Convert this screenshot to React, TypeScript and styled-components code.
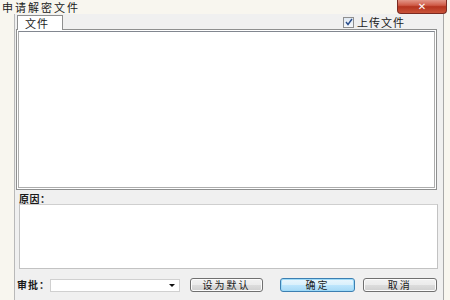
import React from "react";
import styled, { createGlobalStyle } from "styled-components";

const GlobalStyle = createGlobalStyle`
  html, body {
    margin: 0;
    padding: 0;
  }
  body {
    font-family: "Noto Sans CJK SC", "DejaVu Sans", sans-serif;
    font-size: 11px;
    color: #1a1a1a;
  }
`;

const Window = styled.div`
  width: 450px;
  height: 300px;
  overflow: hidden;
  display: flex;
  flex-direction: column;
  background: #f8f6ef;
`;

const TitleBar = styled.div`
  height: 14px;
  display: flex;
  justify-content: space-between;
  align-items: flex-start;
  flex-shrink: 0;
`;

const Title = styled.div`
  padding-left: 2px;
  font-size: 11px;
  line-height: 14px;
  letter-spacing: 2px;
  color: #202020;
  white-space: nowrap;
`;

const CloseButton = styled.div`
  width: 50px;
  height: 15px;
  margin-right: 3px;
  margin-top: -1px;
  border-radius: 0 0 4px 4px;
  border: 1px solid #7a2a22;
  border-top: none;
  background: linear-gradient(#e6a194, #cf5b47 45%, #b5341f 55%, #c9533a);
  color: #fff;
  display: flex;
  align-items: center;
  justify-content: center;
  font-family: "DejaVu Sans", sans-serif;
  font-size: 10px;
  font-weight: bold;
  box-sizing: border-box;
`;

const Frame = styled.div`
  flex: 1;
  margin: 0 6px 0 14px;
  border-left: 1px solid #b9b9b9;
  border-right: 1px solid #a8a8a8;
  background: #f0f0f0;
  display: flex;
  flex-direction: column;
  padding: 0 6px 0 1px;
`;

const TabRow = styled.div`
  height: 15px;
  display: flex;
  justify-content: space-between;
  align-items: flex-end;
  flex-shrink: 0;
`;

const Tab = styled.div`
  width: 46px;
  height: 15px;
  box-sizing: border-box;
  border: 1px solid #8e8f8f;
  border-bottom: none;
  background: #fff;
  margin-left: 1px;
  padding-left: 7px;
  line-height: 14px;
  letter-spacing: 1px;
  margin-bottom: -1px;
  position: relative;
  z-index: 1;
`;

const CheckLabel = styled.label`
  display: flex;
  align-items: center;
  gap: 3px;
  margin-right: 32px;
  margin-bottom: 1px;
  letter-spacing: 1px;
  font-size: 11px;
  line-height: 12px;
`;

const CheckBox = styled.span`
  width: 9px;
  height: 9px;
  border: 1px solid #8f8f8f;
  background: linear-gradient(#dfe8f2, #f6f9fc);
  display: flex;
  align-items: center;
  justify-content: center;
`;

const TabPage = styled.div`
  height: 161px;
  border: 1px solid #8e8f8f;
  background: #fff;
  padding: 1px;
  flex-shrink: 0;
  box-sizing: border-box;
`;

const ListBox = styled.div`
  height: 100%;
  box-sizing: border-box;
  border: 1px solid #adadad;
  border-top-color: #828790;
  background: #fff;
`;

const Caption = styled.div`
  padding: 3px 0 0 3px;
  height: 11px;
  line-height: 11px;
  font-size: 10px;
  font-weight: bold;
  letter-spacing: 0.5px;
  white-space: nowrap;
`;

const TextArea = styled.div`
  margin: 0 -1px 0 3px;
  height: 65px;
  box-sizing: border-box;
  border: 1px solid #c2c2c2;
  border-top-color: #cfcfcf;
  background: #fff;
  flex-shrink: 0;
`;

const BottomRow = styled.div`
  display: flex;
  align-items: center;
  margin-top: 9px;
  padding-left: 1px;
`;

const Label = styled.span`
  font-size: 10px;
  font-weight: bold;
  letter-spacing: 1px;
  width: 33px;
  white-space: nowrap;
  line-height: 12px;
`;

const Combo = styled.div`
  width: 131px;
  height: 13px;
  box-sizing: border-box;
  border: 1px solid #d0d0d0;
  background: #fff;
  display: flex;
  justify-content: flex-end;
  align-items: center;
  padding-right: 4px;
`;

const Arrow = styled.span`
  width: 0;
  height: 0;
  border-left: 3px solid transparent;
  border-right: 3px solid transparent;
  border-top: 3px solid #111;
`;

const Button = styled.div<{ w: number; gap: number; primary?: boolean }>`
  width: ${(p) => p.w}px;
  height: 14px;
  margin-left: ${(p) => p.gap}px;
  box-sizing: border-box;
  border: 1px solid ${(p) => (p.primary ? "#3c7fb1" : "#707070")};
  border-radius: 3px;
  background: ${(p) =>
    p.primary
      ? "linear-gradient(#eaf6fd, #d9f0fc 50%, #bee6fd 50%, #a7d9f5)"
      : "linear-gradient(#f2f2f2, #ebebeb 50%, #dddddd 50%, #cfcfcf)"};
  box-shadow: ${(p) => (p.primary ? "inset 0 0 0 1px #9edbf9" : "inset 0 0 0 1px #fcfcfc")};
  display: flex;
  align-items: center;
  justify-content: center;
  font-size: 10px;
  letter-spacing: 2px;
  line-height: 12px;
  white-space: nowrap;
`;

export default function App() {
  return (
    <>
      <GlobalStyle />
      <Window>
        <TitleBar>
          <Title>申请解密文件</Title>
          <CloseButton>✕</CloseButton>
        </TitleBar>
        <Frame>
          <TabRow>
            <Tab>文件</Tab>
            <CheckLabel>
              <CheckBox>
                <svg width="8" height="8" viewBox="0 0 8 8">
                  <path d="M1 4 L3 6.5 L7 1" fill="none" stroke="#2a4e8c" strokeWidth="1.4" />
                </svg>
              </CheckBox>
              上传文件
            </CheckLabel>
          </TabRow>
          <TabPage>
            <ListBox />
          </TabPage>
          <Caption>原因：</Caption>
          <TextArea />
          <BottomRow>
            <Label>审批：</Label>
            <Combo>
              <Arrow />
            </Combo>
            <Button w={74} gap={10}>设为默认</Button>
            <Button w={75} gap={17} primary>
              确定
            </Button>
            <Button w={75} gap={8}>取消</Button>
          </BottomRow>
        </Frame>
      </Window>
    </>
  );
}
